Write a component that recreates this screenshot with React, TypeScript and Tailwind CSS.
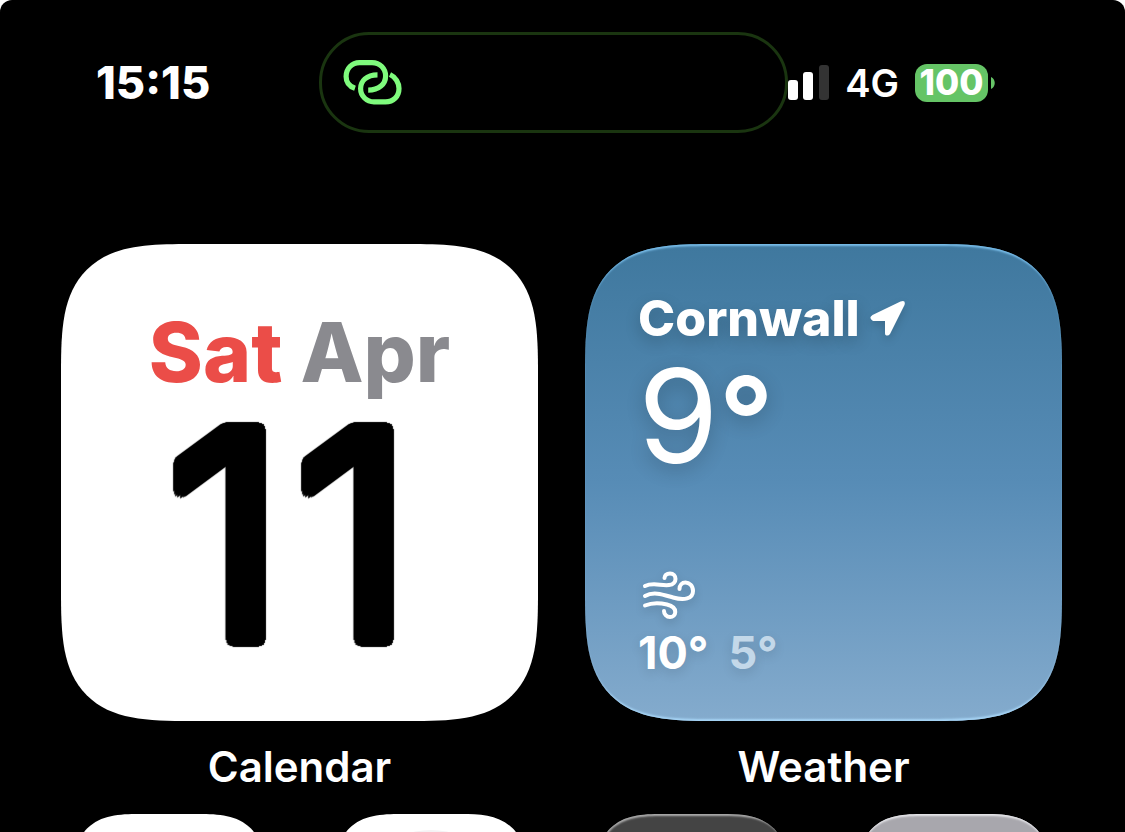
import React from "react";

const squircle =
  "rounded-[85px] supports-[corner-shape:squircle]:rounded-[130px] [corner-shape:superellipse(1.65)]";

const tileShape =
  "rounded-[44px] supports-[corner-shape:squircle]:rounded-[66px] [corner-shape:superellipse(1.5)]";

// Shadow copies on a 7px circle thicken the digits and round their corners.
const roundedDigits =
  "[text-shadow:7px_0_1px_#000,6px_3px_1px_#000,5px_5px_1px_#000,3px_6px_1px_#000,0_7px_1px_#000,-3px_6px_1px_#000,-5px_5px_1px_#000,-6px_3px_1px_#000,-7px_0_1px_#000,-6px_-3px_1px_#000,-5px_-5px_1px_#000,-3px_-6px_1px_#000,0_-7px_1px_#000,3px_-6px_1px_#000,5px_-5px_1px_#000,6px_-3px_1px_#000]";

function LinkIcon() {
  return (
    <svg viewBox="0 0 60 48" className="h-12 w-[60px]" fill="none" stroke="#7ffb7d" strokeWidth="5.2" aria-hidden="true">
      <path d="M13 29.3 C7.5 27.5 4.1 23.2 4.1 17.5 C4.1 9.5 10 3.6 17.5 3.6 H30 C38 3.6 43.6 9.6 43.6 17 C43.6 25 37 31.2 26.2 31.2" />
      <path d="M35.5 15.8 C24.5 15.8 18.6 22 18.6 29.5 C18.6 37 24.5 42.9 32 42.9 H43.5 C51.5 42.9 57 37.3 57 29.5 C57 23.9 53.6 18 48 15.5" />
    </svg>
  );
}

function SignalBars() {
  return (
    <svg viewBox="0 0 57 36" className="h-9 w-[57px]" aria-hidden="true">
      <rect x="0" y="22" width="10" height="13" rx="3" fill="#fff" />
      <rect x="16" y="15" width="10" height="20" rx="3" fill="#fff" />
      <rect x="31" y="7" width="10" height="28" rx="3" fill="#fff" />
      <rect x="47" y="0" width="10" height="35" rx="3" fill="#333" />
    </svg>
  );
}

function StatusBar() {
  return (
    <header className="flex items-center pt-8 pr-[130px] pl-24">
      <time className="w-[223px] text-[45px] leading-[50px] font-extrabold">15:15</time>
      <div className="z-10 flex h-[101px] flex-1 items-center rounded-[50px] border-[3px] border-[#1a3510] bg-black px-5">
        <LinkIcon />
      </div>
      <div className="-ml-4 flex items-center">
        <SignalBars />
        <span className="ml-4 text-[38px] leading-[46px] font-semibold">4G</span>
        <span className="ml-4 flex h-[38px] w-[73px] items-center justify-center rounded-xl bg-[#65c466] text-[35px] leading-none font-extrabold">
          100
        </span>
        <svg viewBox="0 0 4 12" className="ml-[3px] h-3 w-1" aria-hidden="true">
          <path d="M0 0C5 2 5 10 0 12Z" fill="#65c466" />
        </svg>
      </div>
    </header>
  );
}

function CalendarWidget() {
  return (
    <article className="flex flex-col items-center">
      <div className={`flex aspect-square w-full flex-col items-center bg-white pt-[59px] ${squircle}`}>
        <p className="text-[82px] leading-[100px] font-extrabold text-[#8a8a8f]">
          <span className="text-[#eb4d48]">Sat</span> Apr
        </p>
        <p
          className={`flex gap-2.5 pr-5 text-[290px] leading-[264px] font-normal text-black ${roundedDigits}`}
          aria-label="11"
        >
          <span>1</span>
          <span>1</span>
        </p>
      </div>
      <h2 className="mt-6 text-[42px] leading-[44px] font-semibold">Calendar</h2>
    </article>
  );
}

function WindIcon() {
  return (
    <svg
      viewBox="0 0 54 48"
      className="ml-1 h-12 w-[54px] drop-shadow-lg"
      fill="none"
      stroke="#fff"
      strokeWidth="4"
      strokeLinecap="round"
      aria-hidden="true"
    >
      <path d="M3 15C11 11 19 15 27 14C36 13 35 2.5 28 2.5C24.5 2.5 22.5 4.5 22.5 7" />
      <path d="M3 25C12 20 22 24 31 26.5C42 29.5 51 28 51 20C51 14.5 47 11.5 43.5 11.5C40 11.5 37.5 14 37.5 18" />
      <path d="M3 34.5C10 31.5 19 32 25 33.5C37 36.5 34 46 28 46C24.5 46 22 43 22 40" />
    </svg>
  );
}

function WeatherWidget() {
  return (
    <article className="flex flex-col items-center">
      <div
        className={`flex aspect-square w-full flex-col bg-linear-to-b from-[#3f789e] via-[#578cb6] to-[#84abcd] pt-12 pl-[53px] shadow-[inset_0_3px_2px_-1px_#78bce8,inset_0_-3px_2px_-1px_#a6d4f5] ${squircle}`}
      >
        <h3 className="flex items-center gap-2.5 text-[50px] leading-[52px] font-extrabold text-shadow-[0_6px_16px_#0003]">
          Cornwall
          <svg viewBox="0 0 36 36" className="size-9 drop-shadow-lg" aria-hidden="true">
            <path
              d="M2.5 15L30.5 1.5Q36 -0.5 34.5 5L20 34Q18 36.5 15.5 35Q15 34.5 15 33V21H3Q-2 18 2.5 15Z"
              fill="#fff"
            />
          </svg>
        </h3>
        <p className="text-[130px] leading-[144px] text-shadow-[0_6px_20px_#0003]">
          9<span className="text-[120px] font-semibold">°</span>
        </p>
        <div className="mt-auto pb-[42px]">
          <WindIcon />
          <p className="mt-2 flex gap-5 text-[45px] leading-[52px] font-bold text-shadow-[0_4px_12px_#0002]">
            <span>10°</span>
            <span className="text-[#c3d8e9]">5°</span>
          </p>
        </div>
      </div>
      <h2 className="mt-6 text-[42px] leading-[44px] font-semibold">Weather</h2>
    </article>
  );
}

export default function App() {
  return (
    <div className="h-screen overflow-hidden bg-white">
      <main className="min-h-full rounded-t-xl bg-black font-['Inter',sans-serif] text-white">
        <StatusBar />
        <section className="mt-[111px] grid grid-cols-2 gap-[47px] pr-[63px] pl-[61px]">
          <CalendarWidget />
          <WeatherWidget />
        </section>
        <section className="mt-[25px] grid grid-cols-4 justify-items-center pr-10 pl-[38px]">
          <div className={`size-48 bg-white ${tileShape}`} />
          <div className={`flex size-48 justify-center bg-white pt-4 ${tileShape}`}>
            <span className="size-40 rounded-full bg-[#f4f2f4]" />
          </div>
          <div className={`size-48 bg-[#444] shadow-[inset_1px_3px_2px_-1px_#aaa] ${tileShape}`} />
          <div className={`size-48 bg-[#a8a7ad] shadow-[inset_0_3px_2px_-1px_#e4e4e8] ${tileShape}`} />
        </section>
      </main>
    </div>
  );
}
